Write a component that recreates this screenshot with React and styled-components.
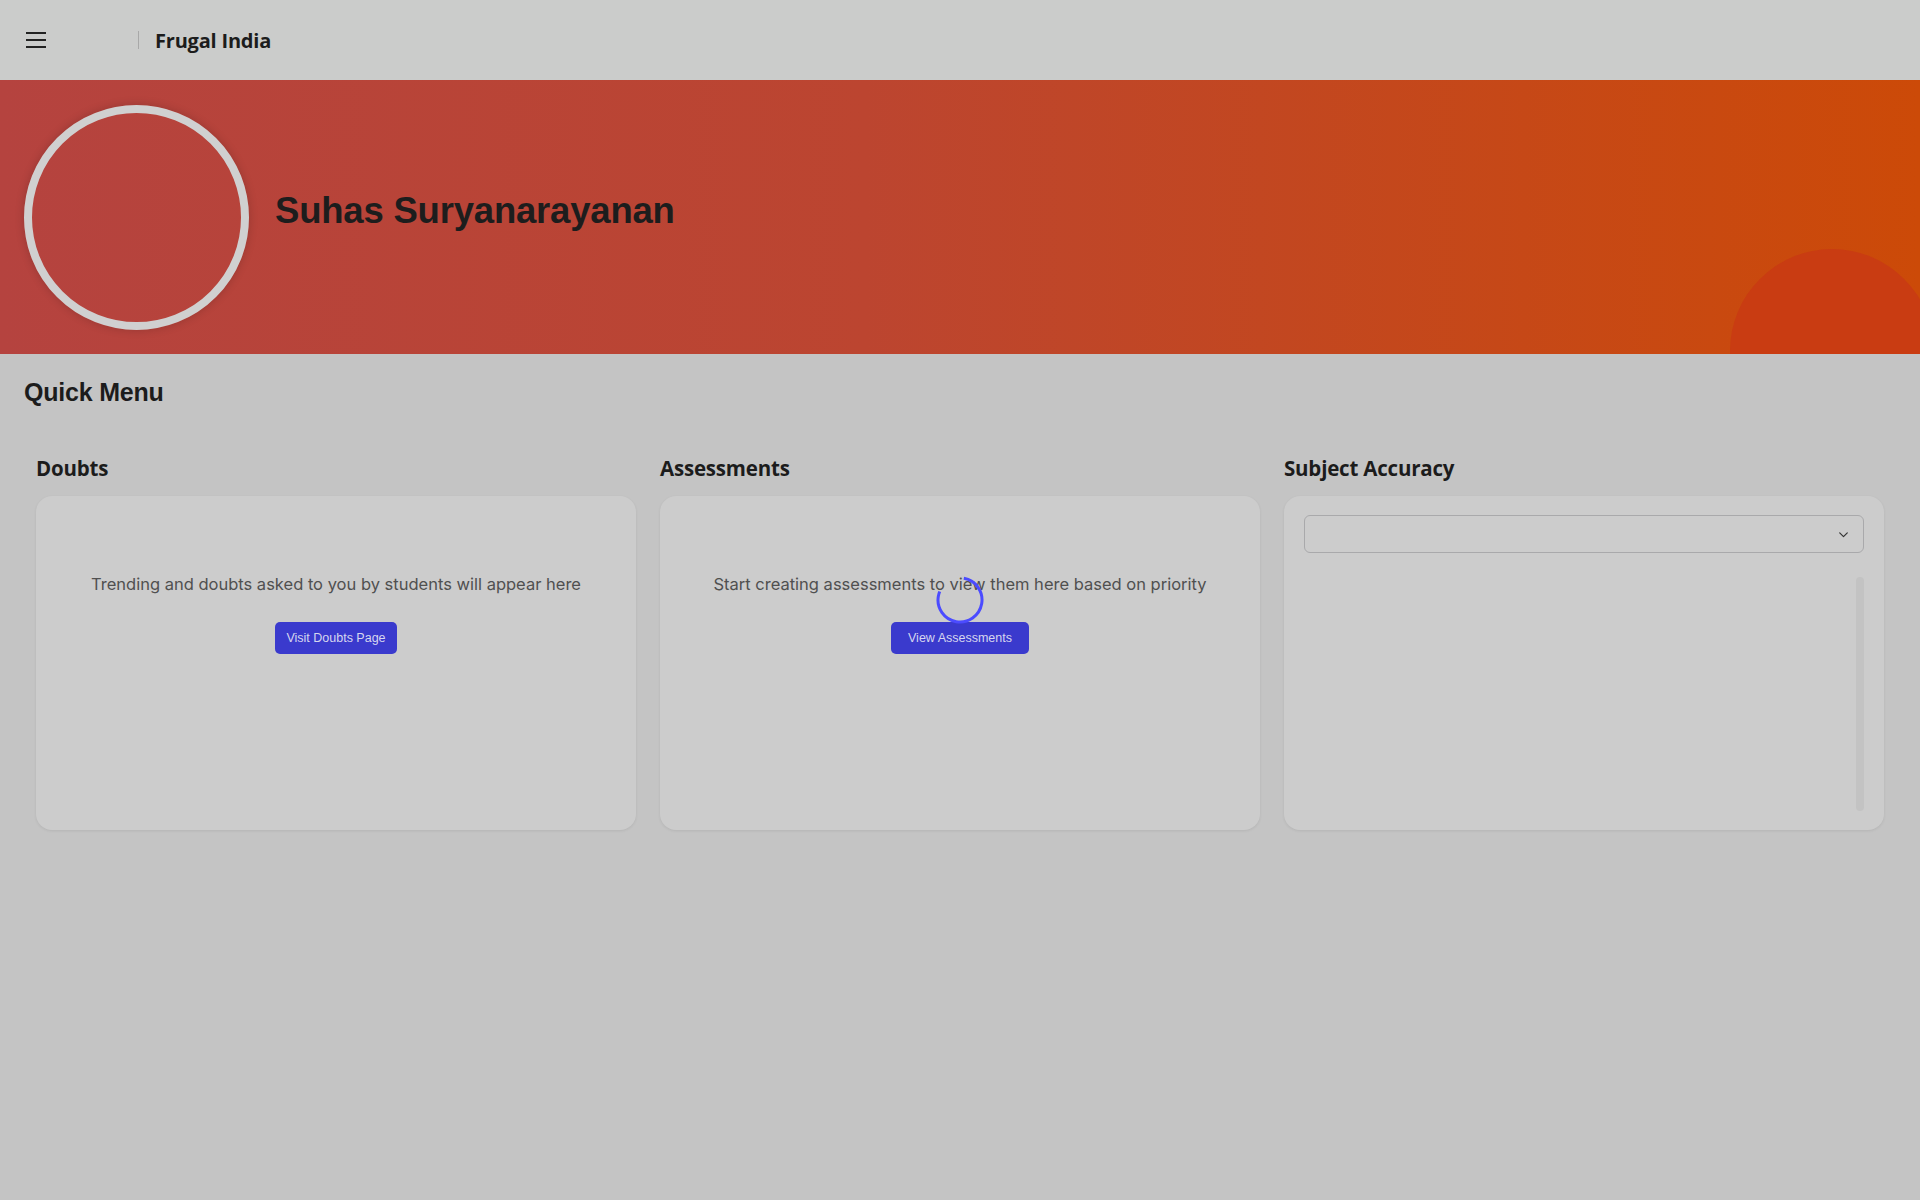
import React from 'react';
import styled, {createGlobalStyle} from 'styled-components';

const GlobalStyle = createGlobalStyle`
  html, body {
    margin: 0;
    padding: 0;
    background: #c4c4c4;
    font-family: Inter, "Liberation Sans", sans-serif;
  }
`;

const Page = styled.div`
  min-height: 1200px;
  background: #c4c4c4;
`;

const NavBar = styled.header`
  height: 80px;
  display: flex;
  align-items: center;
  padding-left: 26px;
  background: #cbcccb;
`;

const MenuButton = styled.button`
  width: 20px;
  height: 16px;
  padding: 0;
  border: none;
  background: none;
  display: flex;
  flex-direction: column;
  justify-content: space-between;
  margin-right: 92px;
  span {
    display: block;
    height: 2px;
    background: #222;
  }
`;

const Divider = styled.div`
  width: 1px;
  height: 18px;
  background: #a8a8a8;
  margin-right: 16px;
`;

const Brand = styled.span`
  font-family: "Open Sans", Inter, sans-serif;
  font-weight: 700;
  font-size: 20px;
  color: #1c1c1c;
  letter-spacing: -0.2px;
`;

const Banner = styled.section`
  position: relative;
  overflow: hidden;
  height: 274px;
  display: flex;
  align-items: center;
  padding-left: 24px;
  background: linear-gradient(90deg, #b5433f 0%, #bc4530 45%, #cc4a08 100%);
`;

const Blob = styled.div`
  position: absolute;
  left: 1730px;
  top: 169px;
  width: 204px;
  height: 204px;
  border-radius: 50%;
  background: #c93c12;
`;

const Avatar = styled.div`
  width: 209px;
  height: 209px;
  border-radius: 50%;
  border: 8px solid #d0d0d0;
  box-shadow: 0 0 10px rgba(0, 0, 0, 0.18);
  margin-right: 26px;
`;

const Name = styled.h1`
  margin: 0 0 12px;
  font-family: "Liberation Sans", Arial, sans-serif;
  font-weight: 700;
  font-size: 36.5px;
  letter-spacing: -0.2px;
  color: #1d1d1d;
`;

const Body = styled.main`
  padding: 24px 24px 0;
`;

const Title = styled.h2`
  margin: 0 0 47px;
  font-family: "Liberation Sans", Arial, sans-serif;
  font-weight: 700;
  font-size: 25px;
  color: #1c1c1c;
  letter-spacing: -0.2px;
`;

const Grid = styled.div`
  display: grid;
  grid-template-columns: repeat(3, 600px);
  gap: 24px;
  padding: 0 12px;
`;

const Column = styled.div`
  display: flex;
  flex-direction: column;
`;

const Heading = styled.h3`
  margin: 0 0 14px 0;
  font-family: "Open Sans", Inter, sans-serif;
  font-weight: 700;
  font-size: 20.5px;
  line-height: 28px;
  color: #1c1c1c;
  letter-spacing: -0.2px;
`;

const Card = styled.div`
  height: 334px;
  box-sizing: border-box;
  border-radius: 16px;
  background: #cccccc;
  box-shadow: 0 1px 3px rgba(0, 0, 0, 0.08);
  display: flex;
  flex-direction: column;
  align-items: center;
  padding: ${p => (p.$form ? '19px 20px' : '76px 20px 0')};
`;

const Message = styled.p`
  margin: 0;
  font-size: 16.5px;
  line-height: 24px;
  color: #505050;
  text-align: center;
`;

const Action = styled.button`
  margin-top: 26px;
  height: 32px;
  padding: 0 ${p => p.$pad || 11}px;
  border: none;
  border-radius: 5px;
  background: #3a3acd;
  color: #d6d6ef;
  font-family: "Liberation Sans", Arial, sans-serif;
  font-size: 12.5px;
`;

const Select = styled.div`
  align-self: stretch;
  height: 38px;
  box-sizing: border-box;
  border: 1px solid #a9a9ab;
  border-radius: 6px;
  display: flex;
  align-items: center;
  justify-content: flex-end;
  padding-right: 13px;
`;

const ScrollArea = styled.div`
  align-self: stretch;
  margin-top: 24px;
  height: 234px;
  display: flex;
  justify-content: flex-end;
`;

const Track = styled.div`
  width: 8px;
  border-radius: 4px;
  background: #c3c3c3;
`;

const Spinner = styled.svg`
  position: fixed;
  left: 936px;
  top: 576px;
  width: 48px;
  height: 48px;
`;

const Chevron = () => (
  <svg width="13" height="13" viewBox="0 0 24 24" fill="none" stroke="#333" strokeWidth="2.2" strokeLinecap="round" strokeLinejoin="round">
    <path d="M5 9l7 7 7-7" />
  </svg>
);

const App = () => (
  <Page>
    <GlobalStyle />
    <NavBar>
      <MenuButton aria-label="menu">
        <span />
        <span />
        <span />
      </MenuButton>
      <Divider />
      <Brand>Frugal India</Brand>
    </NavBar>
    <Banner>
      <Blob />
      <Avatar />
      <Name>Suhas Suryanarayanan</Name>
    </Banner>
    <Body>
      <Title>Quick Menu</Title>
      <Grid>
        <Column>
          <Heading>Doubts</Heading>
          <Card>
            <Message>Trending and doubts asked to you by students will appear here</Message>
            <Action>Visit Doubts Page</Action>
          </Card>
        </Column>
        <Column>
          <Heading>Assessments</Heading>
          <Card>
            <Message>Start creating assessments to view them here based on priority</Message>
            <Action $pad={17}>View Assessments</Action>
          </Card>
        </Column>
        <Column>
          <Heading>Subject Accuracy</Heading>
          <Card $form>
            <Select>
              <Chevron />
            </Select>
            <ScrollArea>
              <Track />
            </ScrollArea>
          </Card>
        </Column>
      </Grid>
    </Body>
    <Spinner viewBox="0 0 48 48">
      <circle
        cx="24"
        cy="24"
        r="22"
        fill="none"
        stroke="#4b4bff"
        strokeWidth="3"
        strokeDasharray="108 30"
        transform="rotate(-80 24 24)"
      />
    </Spinner>
  </Page>
);

export default App;
